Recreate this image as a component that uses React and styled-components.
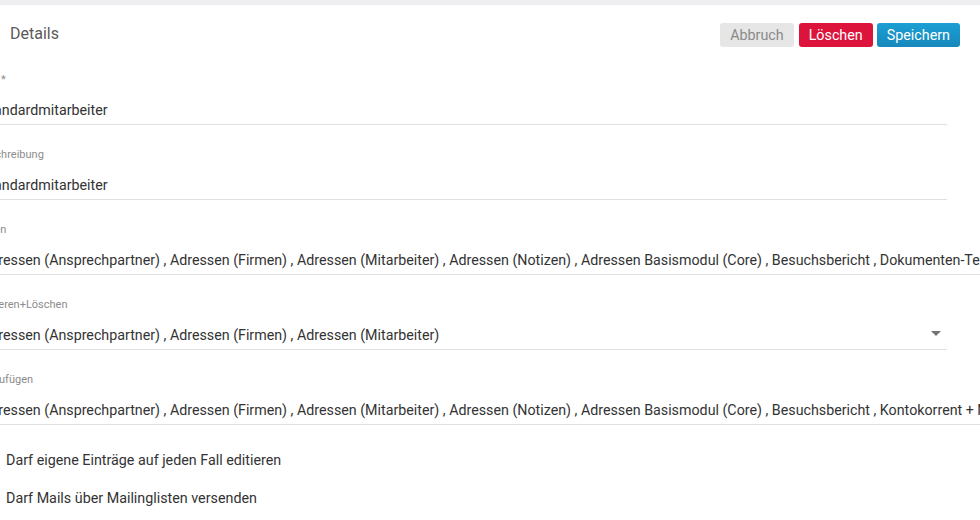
import React from "react";
import styled, { createGlobalStyle } from "styled-components";

const GlobalStyle = createGlobalStyle`
  html, body {
    margin: 0;
    padding: 0;
    background: #ffffff;
    font-family: Roboto, "Liberation Sans", Arial, sans-serif;
  }
`;

const Page = styled.div`
  width: 980px;
  height: 520px;
  overflow: hidden;
  background: #ffffff;
`;

const TopStrip = styled.div`
  height: 5px;
  background: #eeeef0;
`;

const Header = styled.div`
  display: flex;
  align-items: flex-start;
  justify-content: space-between;
  padding: 18px 20px 0 10px;
  height: 50px;
  box-sizing: border-box;
`;

const Title = styled.div`
  font-size: 16px;
  line-height: 20px;
  color: #5a5a5a;
  padding-top: 1px;
`;

const Buttons = styled.div`
  display: flex;
  gap: 4px;
`;

const Button = styled.button`
  height: 24px;
  padding: 0 10px;
  border: none;
  border-radius: 3px;
  font-family: inherit;
  font-size: 14.3px;
  line-height: 24px;
  cursor: pointer;
  color: ${(p) => (p.kind === "cancel" ? "#8a8a8a" : "#ffffff")};
  background: ${(p) =>
    p.kind === "cancel"
      ? "#e6e6e6"
      : p.kind === "danger"
      ? "#dc143c"
      : "linear-gradient(#1c9fd4, #1688bb)"};
  margin-left: ${(p) => (p.kind === "danger" ? "1px" : "0")};
`;

const Form = styled.div`
  margin-left: -19px;
  width: 966px;
  padding-top: 18px;
`;

const Field = styled.div`
  width: ${(p) => (p.wide ? "max-content" : "100%")};
  min-width: 100%;
  margin-bottom: 23px;
  border-bottom: 1px solid #e0e0e0;
  position: relative;
`;

const Label = styled.div`
  margin-left: -4px;
  font-size: 11px;
  line-height: 14px;
  color: #8c8c8c;
`;

const Value = styled.div`
  margin-top: 13px;
  padding-bottom: 4px;
  font-size: 14.25px;
  line-height: 20px;
  color: #333333;
  white-space: nowrap;
`;

const Caret = styled.span`
  position: absolute;
  right: 6px;
  bottom: 13px;
  width: 0;
  height: 0;
  border-left: 5px solid transparent;
  border-right: 5px solid transparent;
  border-top: 5px solid #757575;
`;

const Checks = styled.div`
  padding: 0 0 0 6px;
  margin-top: -7px;
`;

const CheckRow = styled.div`
  height: 38px;
  display: flex;
  align-items: center;
  font-size: 14.3px;
  color: #333333;
`;

const lesen =
  "Adressen (Ansprechpartner) , Adressen (Firmen) , Adressen (Mitarbeiter) , Adressen (Notizen) , Adressen Basismodul (Core) , Besuchsbericht , Dokumenten-Texte , Kontokorrent + Mahnwesen";
const hinzu =
  "Adressen (Ansprechpartner) , Adressen (Firmen) , Adressen (Mitarbeiter) , Adressen (Notizen) , Adressen Basismodul (Core) , Besuchsbericht , Kontokorrent + Mahnwesen";

const fields = [
  { label: "Titel *", value: "Standardmitarbeiter" },
  { label: "Beschreibung", value: "Standardmitarbeiter" },
  { label: "Lesen", value: lesen, wide: true },
  {
    label: "Editieren+Löschen",
    value: "Adressen (Ansprechpartner) , Adressen (Firmen) , Adressen (Mitarbeiter)",
    select: true,
  },
  { label: "Hinzufügen", value: hinzu, wide: true },
];

export default function App() {
  return (
    <Page>
      <GlobalStyle />
      <TopStrip />
      <Header>
        <Title>Details</Title>
        <Buttons>
          <Button kind="cancel">Abbruch</Button>
          <Button kind="danger">Löschen</Button>
          <Button kind="save">Speichern</Button>
        </Buttons>
      </Header>
      <Form>
        {fields.map((f) => (
          <Field key={f.label} wide={f.wide}>
            <Label>{f.label}</Label>
            <Value>{f.value}</Value>
            {f.select && <Caret />}
          </Field>
        ))}
      </Form>
      <Checks>
        <CheckRow>Darf eigene Einträge auf jeden Fall editieren</CheckRow>
        <CheckRow>Darf Mails über Mailinglisten versenden</CheckRow>
      </Checks>
    </Page>
  );
}
